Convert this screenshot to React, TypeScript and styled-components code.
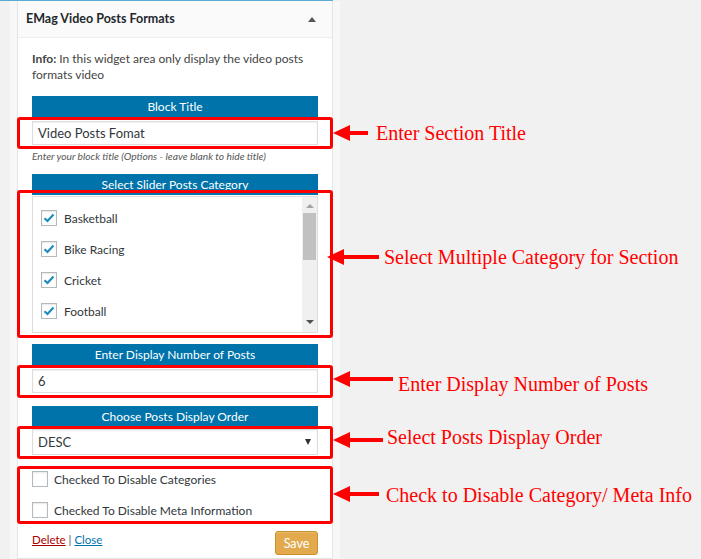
import React from "react";
import styled, { createGlobalStyle } from "styled-components";

const Global = createGlobalStyle`
  html, body { margin: 0; padding: 0; background: #f1f1f1; }
  body { font-family: Lato, "Open Sans", sans-serif; color: #444; }
  * { box-sizing: border-box; }
`;

const Screen = styled.div`
  width: 701px;
  height: 559px;
  overflow: hidden;
  background: #f1f1f1;
`;

const TopRule = styled.div`
  width: 333px;
  height: 1px;
  background: #5aaad2;
`;

const Sidebar = styled.div`
  margin-left: 10px;
  width: 330px;
  height: 558px;
  padding: 0 7px;
  background: #f7f7f7;
`;

const Widget = styled.div`
  border: 1px solid #e5e5e5;
  border-top: 0;
  background: #fff;
  height: 100%;
`;

const Header = styled.div`
  height: 37px;
  display: flex;
  align-items: center;
  justify-content: space-between;
  padding: 0 16px 0 8px;
  background: #fafafa;
  border-bottom: 1px solid #eee;
`;

const HeaderTitle = styled.h3`
  margin: 0 0 2px;
  font-size: 12.5px;
  font-weight: 700;
  color: #23282d;
`;

const CollapseArrow = styled.span`
  width: 0;
  height: 0;
  border-left: 4px solid transparent;
  border-right: 4px solid transparent;
  border-bottom: 5px solid #555;
`;

const Body = styled.div`
  padding: 13px 14px 0;
`;

const Info = styled.p`
  margin: 0;
  font-size: 12px;
  line-height: 16px;
  color: #444;
`;

const InfoLabel = styled.b`
  font-weight: 700;
  margin-right: 3px;
`;

const Bar = styled.div<{ $mt: number }>`
  margin-top: ${(p) => p.$mt}px;
  height: 21px;
  background: #0073aa;
  color: #fff;
  font-size: 12px;
  display: flex;
  align-items: center;
  justify-content: center;
`;

const Field = styled.div<{ $mt: number }>`
  position: relative;
  margin-top: ${(p) => p.$mt}px;
`;

const Frame = styled.div<{ $t: number; $b: number }>`
  position: absolute;
  top: ${(p) => p.$t}px;
  bottom: ${(p) => p.$b}px;
  left: -15px;
  right: -15px;
  border: 3px solid #ff0000;
  border-radius: 3px;
  pointer-events: none;
`;

const Callout = styled.div<{ $x: number; $y: number }>`
  position: absolute;
  left: ${(p) => p.$x}px;
  top: ${(p) => p.$y}px;
  transform: translateY(-50%);
  display: flex;
  align-items: center;
  white-space: nowrap;
`;

const CalloutText = styled.span<{ $gap: number; $dy: number }>`
  margin-left: ${(p) => p.$gap}px;
  position: relative;
  top: ${(p) => p.$dy}px;
  font-family: "Liberation Serif", "Times New Roman", serif;
  font-size: 20px;
  line-height: 24px;
  color: #ff0000;
`;

const TextInput = styled.div<{ $h: number }>`
  height: ${(p) => p.$h}px;
  border: 1px solid #ddd;
  box-shadow: inset 0 1px 2px rgba(0, 0, 0, 0.07);
  background: #fff;
  display: flex;
  align-items: center;
  justify-content: space-between;
  padding: 0 6px 0 5px;
  font-size: 13px;
  color: #32373c;
`;

const SelectArrow = styled.span`
  width: 0;
  height: 0;
  border-left: 3.5px solid transparent;
  border-right: 3.5px solid transparent;
  border-top: 6px solid #333;
`;

const Help = styled.p`
  margin: 4px 0 0;
  font-size: 10.2px;
  line-height: 14px;
  font-style: italic;
  color: #555;
`;

const ListBox = styled.div`
  height: 137px;
  border: 1px solid #ddd;
  display: flex;
  background: #fff;
`;

const CatList = styled.div`
  flex: 1;
  padding: 13px 0 0 8px;
  display: flex;
  flex-direction: column;
  gap: 15px;
`;

const Row = styled.label`
  display: flex;
  align-items: center;
  gap: 7px;
  height: 16px;
  font-size: 12px;
  color: #32373c;
`;

const Box = styled.span`
  width: 16px;
  height: 16px;
  border: 1px solid #b4b9be;
  background: #fff;
  box-shadow: inset 0 1px 2px rgba(0, 0, 0, 0.1);
  display: flex;
  align-items: center;
  justify-content: center;
  flex: none;
`;

const Scrollbar = styled.div`
  width: 15px;
  background: #f0f0f0;
  display: flex;
  flex-direction: column;
  align-items: center;
`;

const ScrollUp = styled.span`
  margin-top: 7px;
  width: 0;
  height: 0;
  border-left: 4px solid transparent;
  border-right: 4px solid transparent;
  border-bottom: 4px solid #a3a3a3;
`;

const Thumb = styled.div`
  margin-top: 5px;
  width: 13px;
  height: 47px;
  background: #c1c1c1;
`;

const ScrollDown = styled.span`
  margin-top: auto;
  margin-bottom: 8px;
  width: 0;
  height: 0;
  border-left: 4px solid transparent;
  border-right: 4px solid transparent;
  border-top: 4px solid #505050;
`;

const OptionList = styled.div`
  display: flex;
  flex-direction: column;
  gap: 11px;
`;

const OptionRow = styled.label`
  display: flex;
  align-items: center;
  gap: 6px;
  height: 20px;
  font-size: 12px;
  color: #32373c;
`;

const Footer = styled.div`
  margin-top: 11px;
  display: flex;
  justify-content: space-between;
  align-items: flex-start;
`;

const Links = styled.div`
  font-size: 11.5px;
  line-height: 18px;
  color: #555;
`;

const Link = styled.a<{ $danger?: boolean }>`
  color: ${(p) => (p.$danger ? "#a00" : "#0073aa")};
  text-decoration: underline;
`;

const SaveButton = styled.button`
  width: 43px;
  height: 24px;
  padding: 0;
  border: 1px solid #c8922f;
  border-radius: 3px;
  background: #e2aa4c;
  color: #fff;
  font-family: Lato, sans-serif;
  font-size: 12.5px;
  box-shadow: inset 0 1px 0 rgba(255, 255, 255, 0.2);
`;

const Arrow = ({ len }: { len: number }) => (
  <svg width={len} height={18} viewBox={`0 0 ${len} 18`}>
    <polygon points="0,9 17,1 17,17" fill="#ff0000" />
    <rect x={14} y={7} width={len - 14} height={4} fill="#ff0000" />
  </svg>
);

const Check = () => (
  <svg width="12" height="12" viewBox="0 0 12 12">
    <path d="M1.5 6.2 L4.5 9 L10.5 2.5" fill="none" stroke="#1e8cbe" strokeWidth="2.2" />
  </svg>
);

type CalloutProps = { x: number; y: number; len: number; gap: number; dy?: number; text: string };
const Note = ({ x, y, len, gap, dy = 0, text }: CalloutProps) => (
  <Callout $x={x} $y={y}>
    <Arrow len={len} />
    <CalloutText $gap={gap} $dy={dy}>{text}</CalloutText>
  </Callout>
);

const categories = ["Basketball", "Bike Racing", "Cricket", "Football"];

export default function App() {
  return (
    <Screen>
      <Global />
      <TopRule />
      <Sidebar>
        <Widget>
          <Header>
            <HeaderTitle>EMag Video Posts Formats</HeaderTitle>
            <CollapseArrow />
          </Header>
          <Body>
            <Info>
              <InfoLabel>Info:</InfoLabel>In this widget area only display the video posts
              <br />
              formats video
            </Info>

            <Bar $mt={13}>Block Title</Bar>
            <Field $mt={4}>
              <TextInput $h={24}>Video Posts Fomat</TextInput>
              <Frame $t={-4} $b={-4} />
              <Note x={301} y={12} len={35} gap={8} text="Enter Section Title" />
            </Field>
            <Help>Enter your block title (Options - leave blank to hide title)</Help>

            <Bar $mt={11}>Select Slider Posts Category</Bar>
            <Field $mt={1}>
              <ListBox>
                <CatList>
                  {categories.map((c) => (
                    <Row key={c}>
                      <Box>
                        <Check />
                      </Box>
                      {c}
                    </Row>
                  ))}
                </CatList>
                <Scrollbar>
                  <ScrollUp />
                  <Thumb />
                  <ScrollDown />
                </Scrollbar>
              </ListBox>
              <Frame $t={-6} $b={-5} />
              <Note x={295} y={61} len={52} gap={5} text="Select Multiple Category for Section" />
            </Field>

            <Bar $mt={11}>Enter Display Number of Posts</Bar>
            <Field $mt={4}>
              <TextInput $h={24}>6</TextInput>
              <Frame $t={-4} $b={-5} />
              <Note x={301} y={10} len={60} gap={5} dy={5} text="Enter Display Number of Posts" />
            </Field>

            <Bar $mt={13}>Choose Posts Display Order</Bar>
            <Field $mt={2}>
              <TextInput $h={26}>
                DESC
                <SelectArrow />
              </TextInput>
              <Frame $t={-3} $b={-4} />
              <Note x={301} y={11} len={50} gap={4} dy={-3} text="Select Posts Display Order" />
            </Field>

            <Field $mt={14}>
              <OptionList>
                <OptionRow>
                  <Box />
                  Checked To Disable Categories
                </OptionRow>
                <OptionRow>
                  <Box />
                  Checked To Disable Meta Information
                </OptionRow>
              </OptionList>
              <Frame $t={-3} $b={-4} />
              <Note x={301} y={25} len={46} gap={7} dy={1} text="Check to Disable Category/ Meta Info" />
            </Field>

            <Footer>
              <Links>
                <Link $danger href="#">Delete</Link> | <Link href="#">Close</Link>
              </Links>
              <SaveButton>Save</SaveButton>
            </Footer>
          </Body>
        </Widget>
      </Sidebar>
    </Screen>
  );
}
